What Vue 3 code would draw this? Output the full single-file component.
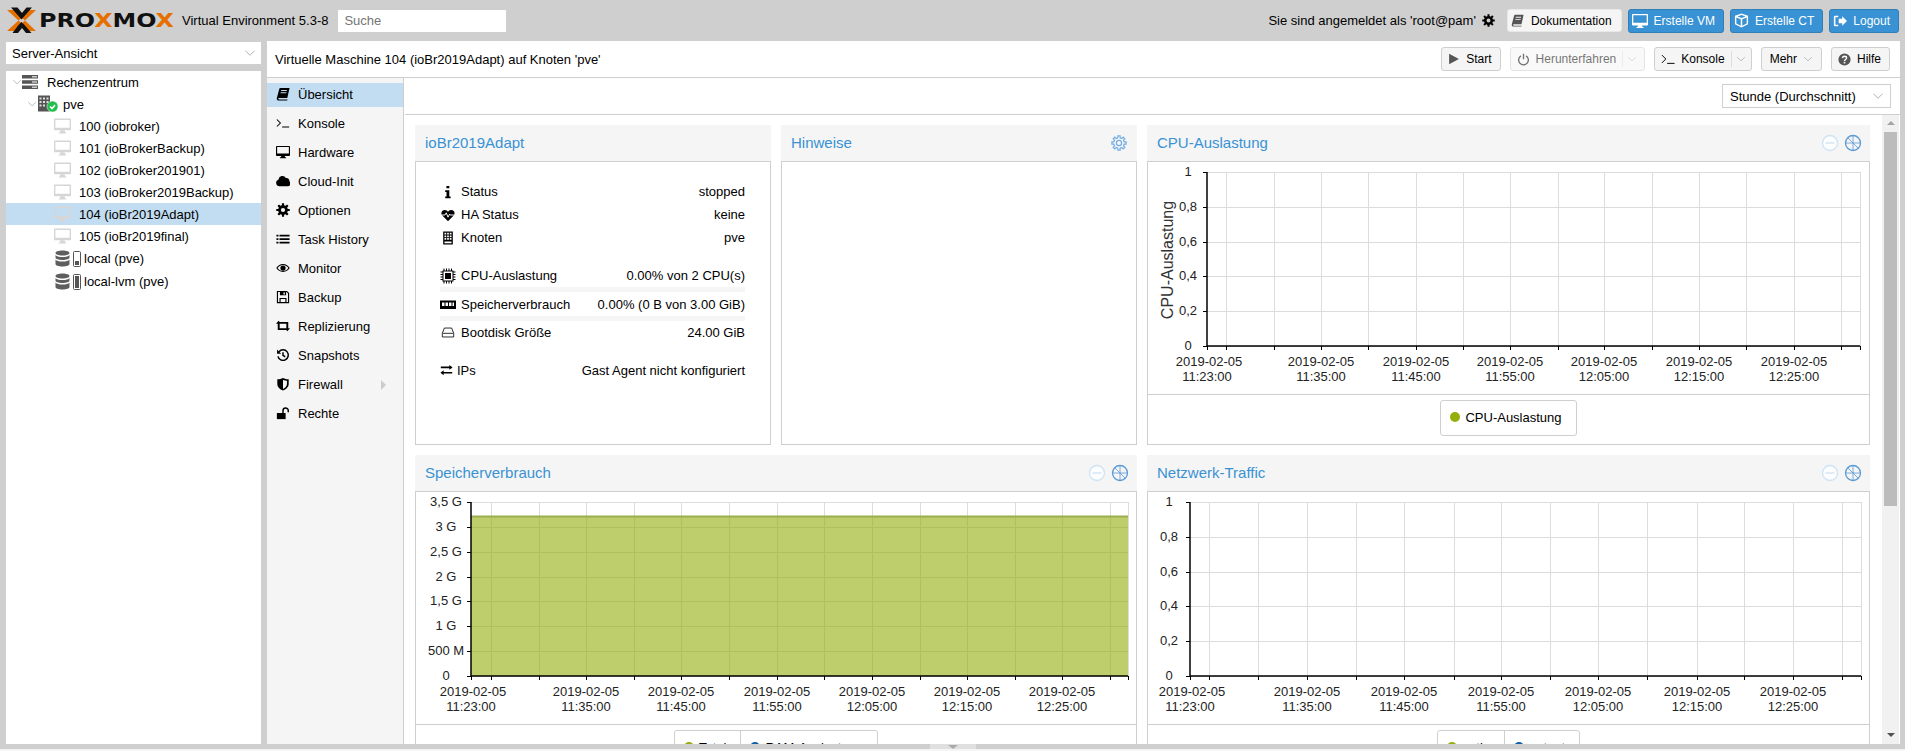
<template>
  <div class="app">
    <header class="topbar">
      <svg class="logo" width="176" height="41" viewBox="0 0 176 41">
        <path d="M7 10h8l7 7.5-3.5 3zM7 31h8l7-7.5-3.500-3zM36 10h-8l-6.500 7.500 3.500 3zM36 31h-8l-6.500-7.500 3.500-3z" fill="#e57000" />
        <path d="M11 7.500h6.500L22 13l4.500-5.500H32L24.500 16l-3 3.500-3-3.500zM12.500 33H18l4-5 4 5h5.500L24.500 25l-3-3-3 3z" fill="#111" />
        <text x="39" y="27" class="logo-text" textLength="135" lengthAdjust="spacingAndGlyphs">PRO<tspan fill="#e57000">X</tspan>MO<tspan fill="#e57000">X</tspan></text>
      </svg>
      <span class="version">Virtual Environment 5.3-8</span>
      <input class="search" placeholder="Suche" />
      <div class="user">
        <span>Sie sind angemeldet als 'root@pam'</span>
        <Ico name="gear" :size="13" class="user-gear" />
        <button class="btn doc"><Ico name="book" :size="13" class="dim" />Dokumentation</button>
        <button class="btn primary"><Ico name="desktop" :size="16" />Erstelle VM</button>
        <button class="btn primary"><Ico name="cube" :size="15" />Erstelle CT</button>
        <button class="btn primary"><Ico name="signout" :size="14" />Logout</button>
      </div>
    </header>

    <div class="main">
      <aside class="left">
        <div class="combo view-combo">
          <span>Server-Ansicht</span>
          <Ico name="chev" :size="12" class="chev" />
        </div>
        <div class="tree">
          <div class="row depth0">
            <Ico name="chev" :size="10" class="chev twisty" />
            <svg width="16" height="16" viewBox="0 0 16 16" class="tree-ico">
              <path d="M0 1h16v3.600H0zM0 6.200h16v3.600H0zM0 11.400h16v3.600H0z" fill="#555" />
              <path d="M10 2h5v1.400h-5zM10 7.300h5v1.400h-5zM10 12.500h5v1.400h-5z" fill="#ccc" />
            </svg>
            <span class="first-label">Rechenzentrum</span>
          </div>
          <div class="row depth1">
            <Ico name="chev" :size="10" class="chev twisty" />
            <svg width="20" height="18" viewBox="0 0 20 18" class="tree-ico">
              <path d="M0 .500h12v16H0z" fill="#555" />
              <path d="M1.500 2.500h2v2h-2zM5 2.500h2v2H5zM8.500 2.500h2v2h-2zM1.500 6h2v2h-2zM5 6h2v2H5zM8.500 6h2v2h-2zM1.500 9.500h2v2h-2zM5 9.500h2v2H5z" fill="#ddd" />
              <circle cx="14.500" cy="11.500" r="5.500" fill="#21bf4b" stroke="#fff" stroke-width=".5" />
              <path d="M12 11.500l2 2 3-3.400" fill="none" stroke="#fff" stroke-width="1.600" />
            </svg>
            <span class="pve-label">pve</span>
          </div>
          <div v-for="vm in vms" :key="vm.id" class="row depth2" :class="{ selected: vm.id === 104 }">
            <svg width="17" height="16" viewBox="0 0 16 15" class="tree-ico">
              <path fill-rule="evenodd" d="M1 .500h14c.6 0 1 .4 1 1V10.500c0 .6-.4 1-1 1H1c-.6 0-1-.4-1-1V1.500c0-.6.4-1 1-1zM1.300 1.800v7.400h13.400V1.800z" fill="#d6d6d6" />
              <path d="M6 11.500h4l.5 2h1v1h-7v-1h1z" fill="#d6d6d6" />
            </svg>
            <span class="vm-label">{{ vm.id }} ({{ vm.name }})</span>
          </div>
          <div v-for="st in storages" :key="st.name" class="row depth2 storage">
            <svg width="15" height="17" viewBox="0 0 15 17" class="tree-ico">
              <path d="M7.500 .500c4 0 7 1 7 2.500s-3 2.500-7 2.500-7-1-7-2.500 3-2.500 7-2.500zM.5 5c1 1.400 3.500 2 7 2s6-.6 7-2v2.500c0 1.500-3 2.500-7 2.500s-7-1-7-2.500zM.5 9.500c1 1.400 3.500 2 7 2s6-.6 7-2v4.500c0 1.500-3 2.500-7 2.500s-7-1-7-2.500z" fill="#5e5e5e" />
            </svg>
            <svg width="8" height="16" viewBox="0 0 8 16" class="battery">
              <rect x=".5" y=".5" width="7" height="15" rx="1" fill="#fff" stroke="#555" />
              <rect x="2" :y="14 - st.level" width="4" :height="st.level" fill="#555" />
            </svg>
            <span class="st-label">{{ st.name }}</span>
          </div>
        </div>
      </aside>

      <section class="content">
        <div class="title-bar">
          <span class="title">Virtuelle Maschine 104 (ioBr2019Adapt) auf Knoten 'pve'</span>
          <div class="actions">
            <button class="btn"><Ico name="play" :size="12" class="dim" />Start</button>
            <button class="btn split disabled"><Ico name="power" :size="13" />Herunterfahren<i class="sep"></i><Ico name="chev" :size="10" class="chev" /></button>
            <button class="btn split"><Ico name="terminal" :size="14" />Konsole<i class="sep"></i><Ico name="chev" :size="10" class="chev" /></button>
            <button class="btn more">Mehr<Ico name="chev" :size="10" class="chev" /></button>
            <button class="btn"><Ico name="question" :size="13" class="dim" />Hilfe</button>
          </div>
        </div>

        <div class="body">
          <nav class="nav">
            <a v-for="item in navItems" :key="item.label" class="nav-item" :class="{ active: item.label === 'Übersicht' }">
              <Ico :name="item.icon" :size="14" />
              <span>{{ item.label }}</span>
              <i v-if="item.arrow" class="arrow"></i>
            </a>
          </nav>

          <div class="pane">
            <div class="range-bar">
              <div class="combo range-combo">
                <span>Stunde (Durchschnitt)</span>
                <Ico name="chev" :size="12" class="chev" />
              </div>
            </div>

            <div class="dash">
              <div class="grid">
                <div class="panel">
                  <div class="panel-head"><span>ioBr2019Adapt</span></div>
                  <div class="panel-body info">
                    <div v-for="r in infoTop" :key="r.label" class="info-row">
                      <Ico :name="r.icon" :size="r.size || 14" class="info-ico" />
                      <span>{{ r.label }}</span>
                      <span class="val">{{ r.value }}</span>
                    </div>
                    <div class="info-row cpu-row">
                      <Ico name="cpu" :size="16" class="info-ico" />
                      <span>CPU-Auslastung</span>
                      <span class="val">0.00% von 2 CPU(s)</span>
                    </div>
                    <div class="usage"></div>
                    <div class="info-row">
                      <Ico name="memory" :size="16" class="info-ico" />
                      <span>Speicherverbrauch</span>
                      <span class="val">0.00% (0 B von 3.00 GiB)</span>
                    </div>
                    <div class="usage last"></div>
                    <div class="info-row">
                      <Ico name="hdd" :size="13" class="info-ico" />
                      <span>Bootdisk Größe</span>
                      <span class="val">24.00 GiB</span>
                    </div>
                    <div class="info-row ip-row">
                      <Ico name="exchange" :size="13" class="ip-ico" />
                      <span>IPs</span>
                      <span class="val">Gast Agent nicht konfiguriert</span>
                    </div>
                  </div>
                </div>

                <div class="panel">
                  <div class="panel-head">
                    <span>Hinweise</span>
                    <svg width="16" height="16" viewBox="0 0 16 16" class="notes-gear">
                      <path :d="gearOutline" fill="none" stroke="#73ade3" stroke-width="1.200" />
                      <circle cx="8" cy="8" r="2.600" fill="none" stroke="#73ade3" stroke-width="1.200" />
                    </svg>
                  </div>
                  <div class="panel-body"></div>
                </div>

                <div v-for="c in charts" :key="c.title" class="panel" :class="c.cls">
                  <div class="panel-head">
                    <span>{{ c.title }}</span>
                    <span class="tools">
                      <svg width="18" height="18" viewBox="0 0 18 18">
                        <circle cx="9" cy="9" r="7.500" fill="#fbfdff" stroke="#cfe3f3" stroke-width="1.300" />
                        <path d="M4.500 9h9" stroke="#cfe3f3" stroke-width="1.300" />
                      </svg>
                      <svg width="18" height="18" viewBox="0 0 18 18">
                        <circle cx="9" cy="9" r="7.500" fill="none" stroke="#5b9bd5" stroke-width="1.300" />
                        <path d="M9 1.500v15M3.700 3.700L9 9H1.500M14.300 14.300L9 9h7.500" fill="none" stroke="#5b9bd5" stroke-width=".8" />
                      </svg>
                    </span>
                  </div>
                  <div class="panel-body chart-body">
                    <svg class="chart" :viewBox="c.viewBox" :width="c.w" height="232">
                      <g class="grid-lines">
                        <line v-for="x in c.verticals" :key="'v' + x" :x1="x" :x2="x" :y1="c.top" :y2="c.bottom" />
                        <line v-for="t in c.yTicks" :key="'h' + t.y" :x1="c.x0" :x2="c.x1" :y1="t.y" :y2="t.y" />
                        <line :x1="c.x1" :x2="c.x1" :y1="c.top" :y2="c.bottom" />
                      </g>
                      <g v-if="c.fillTop">
                        <rect :x="c.x0" :y="c.fillTop" :width="c.x1 - c.x0" :height="c.bottom - c.fillTop" fill="#94ae0a" fill-opacity=".6" />
                        <line :x1="c.x0" :x2="c.x1" :y1="c.fillTop + .5" :y2="c.fillTop + .5" stroke="#9aae50" stroke-width="2" />
                      </g>
                      <g class="ticks">
                        <line v-for="x in c.verticals" :key="'tx' + x" :x1="x" :x2="x" :y1="c.bottom" :y2="c.bottom + 4" />
                        <line :x1="c.x0" :x2="c.x0" :y1="c.bottom" :y2="c.bottom + 4" />
                        <line :x1="c.x1" :x2="c.x1" :y1="c.bottom" :y2="c.bottom + 4" />
                        <line v-for="t in c.yTicks" :key="'ty' + t.y" :x1="c.x0 - 4" :x2="c.x0" :y1="t.y" :y2="t.y" />
                      </g>
                      <line class="axis" :x1="c.x0" :x2="c.x0" :y1="c.top" :y2="c.bottom + 1" />
                      <line class="axis" :x1="c.x0" :x2="c.x1" :y1="c.bottom" :y2="c.bottom" />
                      <g class="labels">
                        <text v-for="t in c.yTicks" :key="'yl' + t.y" :x="c.x0 - c.labelOffset" :y="t.y + 4" text-anchor="middle">{{ t.label }}</text>
                        <g v-for="(l, i) in c.xLabels" :key="l.time">
                          <text :x="l.x + (i === 0 ? 2 : 0)" :y="c.bottom + 20" text-anchor="middle">2019-02-05</text>
                          <text :x="l.x" :y="c.bottom + 35" text-anchor="middle">{{ l.time }}</text>
                        </g>
                      </g>
                      <text v-if="c.axisTitle" class="axis-title" :transform="`translate(${c.x0 - 34} 260) rotate(-90)`" text-anchor="middle">{{ c.axisTitle }}</text>
                    </svg>
                    <div class="legend-bar">
                      <div class="legend">
                        <div v-for="l in c.legend" :key="l.label" class="legend-item">
                          <i class="dot" :style="{ background: l.color }"></i>
                          <span>{{ l.label }}</span>
                        </div>
                      </div>
                    </div>
                  </div>
                </div>
              </div>

              <div class="scrollbar">
                <i class="sb-up"></i>
                <div class="sb-thumb"></div>
                <i class="sb-down"></i>
              </div>
            </div>
          </div>
        </div>
      </section>
    </div>

    <div class="log-handle"><div class="handle"><i></i></div></div>
  </div>
</template>

<script setup>
import { h } from 'vue'

function gearPath(cx, cy, ro, ri) {
  let d = ''
  for (let i = 0; i < 8; i++) {
    const a = i * 45
    const pts = [[ri, a - 13], [ro, a - 9], [ro, a + 9], [ri, a + 13]]
    for (const [r, deg] of pts) {
      const rad = (deg * Math.PI) / 180
      d += `${d ? 'L' : 'M'}${(cx + r * Math.cos(rad)).toFixed(2)} ${(cy + r * Math.sin(rad)).toFixed(2)}`
    }
  }
  return d + 'z'
}

const gearOutline = gearPath(8, 8, 7.2, 5.3)

// chip pins, four on each side
function cpuPins() {
  let d = ''
  for (const p of [3.5, 6, 8.5, 11]) {
    d += `M${p} .5h1v2h-1zM${p} 13.5h1v2h-1zM.5 ${p}h2v1h-2zM13.5 ${p}h2v1h-2z`
  }
  return d
}

const icons = {
  gear: { f: gearPath(8, 8, 7.8, 5.6) + 'M8 5.600a2.400 2.400 0 1 0 0 4.800 2.400 2.400 0 0 0 0-4.800z' },
  book: { f: 'M5 1h10.500l-2.600 11.500H3.600c-.8 0-1.200.4-1.100 1s.6.9 1.300.9h9.300l-.3 1.100H3.400C1.600 15.500.4 14.200 1 12.500L3.800 2.100C4 1.400 4.400 1 5 1zM6 3.500l-.2 1h6.500l.2-1zM5.400 6l-.2 1h6.500l.2-1z' },
  desktop: { f: 'M1 1h14c.6 0 1 .4 1 1v9.500c0 .6-.4 1-1 1H1c-.6 0-1-.4-1-1V2c0-.6.4-1 1-1zM1.300 2.300v7.500h13.400V2.300zM6 12.500h4l.4 1.500h1.100v1h-7v-1h1.100z' },
  cube: { f: 'M8 .500l7 2.500v9l-7 3.500L1 12V3zM8 2.100L3.700 3.600 8 5.200l4.300-1.600zM2.500 4.800v6.300l4.700 2.400V6.600zM13.500 4.800L8.800 6.600v6.900l4.700-2.400z' },
  signout: { f: 'M6 2H2.500C1.700 2 1 2.700 1 3.500v9c0 .8.7 1.500 1.500 1.500H6v-1.600H2.800V3.600H6zM6.500 5.500h4V2.500L16 8l-5.500 5.500v-3h-4z' },
  play: { f: 'M1.500 1l13 7-13 7z' },
  power: { s: 'M4.800 3.500a6 6 0 1 0 6.400 0M8 .8v7', w: 1.7 },
  terminal: { s: 'M1 3.500L5.500 8 1 12.500M7 13h8.500', w: 1.1 },
  question: { f: 'M8 .5a7.500 7.500 0 1 1 0 15 7.500 7.500 0 0 1 0-15zM7 11v2h2v-2z', k: 'M5.500 6.200C5.700 4.800 6.700 4 8 4c1.400 0 2.500.9 2.500 2.100 0 1.900-2.500 1.900-2.500 4', kw: 1.8 },
  chev: { s: 'M2 5l6 6 6-6', w: 1.2 },
  terminalNav: { s: 'M1 4l4 4-4 4M7 12.500h8', w: 1.200 },
  cloud: { f: 'M4 14a4 4 0 0 1-1.100-7.800 4.500 4.500 0 0 1 8.400-1.600 3.100 3.100 0 0 1 3.900 3.600A3.200 3.200 0 0 1 12.700 14z' },
  list: { f: 'M.5 3h2.300v2H.5zM4 3h11.500v2H4zM.5 7h2.300v2H.5zM4 7h11.500v2H4zM.5 11h2.300v2H.5zM4 11h11.500v2H4z' },
  eye: { f: 'M8 3.500c3.500 0 6.200 2.100 7.700 4.500-1.500 2.400-4.200 4.500-7.700 4.500S1.800 10.400.3 8C1.800 5.600 4.500 3.500 8 3.500zM8 4.500C5.300 4.500 3.200 6 1.900 8c1.300 2 3.400 3.500 6.100 3.500s4.800-1.500 6.100-3.500C12.800 6 10.700 4.500 8 4.500zM8 5a3 3 0 1 1 0 6 3 3 0 0 1 0-6z' },
  save: { f: 'M1 1h11.500L15 3.500V15H1zM2.300 2.300v11.400H4V9h8v4.700h1.700V4L12 2.300h-.5V6h-7V2.300zM8.500 2.800h1.700v2.400H8.500zM5.300 10.300v3.400h5.400v-3.400z' },
  retweet: { f: 'M0 5.500L3 2l3 3.500H4.200v5H10l1.800 2.200H2V5.500zM16 10.500L13 14l-3-3.500h1.800v-5H6L4.200 3.300H14v7.200z' },
  history: { s: 'M3.400 4.300A6 6 0 1 1 2.200 9.500M8 4.800v3.700l2.500 1.500', w: 1.700, f: 'M1.200 1.800v4.700h4.700z' },
  shield: { f: 'M8 1c2 1 4 1.500 6.500 1.500V8c0 3.500-3 6-6.500 7.500C4.500 14 1.500 11.500 1.500 8V2.500C4 2.500 6 2 8 1zM8 3.300v10.300c2.500-1.200 4.500-3 4.500-5.600V4.200C11 4.200 9.500 3.900 8 3.300z' },
  unlock: { f: 'M1 8h10v7H1z', s: 'M8 8V5.200a3 3 0 0 1 6 0V7', w: 1.700 },
  info: { f: 'M6.200 1.200h3.300v2.500H6.200zM4.800 6h4.700v7h1.500v2H4.800v-2h1.500V8H4.800z' },
  heartbeat: { f: 'M8 15L1.500 8.500C-.4 6.500.3 2.500 4 2.200c2-.2 3.400 1 4 2 .6-1 2-2.200 4-2 3.700.3 4.400 4.300 2.500 6.300z', k: 'M1 8h3.500l1.500-2.500 2 5 1.800-3.500.7 1H15', kw: 1.100 },
  building: { f: 'M2.500 .5h11v15h-11zM4 2v2h2V2zM7 2v2h2V2zM10 2v2h2V2zM4 5v2h2V5zM7 5v2h2V5zM10 5v2h2V5zM4 8v2h2V8zM7 8v2h2V8zM10 8v2h2V8zM4 12v2h8v-2z' },
  cpu: { f: cpuPins() + 'M2.500 2.500h11v11h-11zM3.500 3.500v9h9v-9zM5 5h6v6H5z' },
  memory: { f: 'M0 3.500h16v8.500H0zM2 5.500V9h2.500V5.500zM5.500 5.500V9H8V5.500zM9 5.500V9h2.500V5.500zM12.500 5.500V9H14V5.500z' },
  hdd: { s: 'M3.500 2.500h9L15 9v4.500H1V9zM1.500 9h13', w: 1.000 },
  exchange: { f: 'M1 3.200h10.500V1.200l4 3-4 3v-2H1zM15 9.800H4.500v-2l-4 3 4 3v-2H15z' },
}

const Ico = (props) => {
  const def = icons[props.name] || {}
  const kids = []
  if (def.f) kids.push(h('path', { d: def.f, fill: 'currentColor', 'fill-rule': 'evenodd' }))
  if (def.s) kids.push(h('path', { d: def.s, fill: 'none', stroke: 'currentColor', 'stroke-width': def.w || 1 }))
  if (def.k) kids.push(h('path', { d: def.k, fill: 'none', stroke: '#fff', 'stroke-width': def.kw || 1 }))
  return h('svg', { width: props.size || 16, height: props.size || 16, viewBox: '0 0 16 16' }, kids)
}
Ico.props = ['name', 'size']

const vms = [
  { id: 100, name: 'iobroker' },
  { id: 101, name: 'ioBrokerBackup' },
  { id: 102, name: 'ioBroker201901' },
  { id: 103, name: 'ioBroker2019Backup' },
  { id: 104, name: 'ioBr2019Adapt' },
  { id: 105, name: 'ioBr2019final' },
]

const storages = [
  { name: 'local (pve)', level: 4 },
  { name: 'local-lvm (pve)', level: 12 },
]

const navItems = [
  { label: 'Übersicht', icon: 'book' },
  { label: 'Konsole', icon: 'terminalNav' },
  { label: 'Hardware', icon: 'desktop' },
  { label: 'Cloud-Init', icon: 'cloud' },
  { label: 'Optionen', icon: 'gear' },
  { label: 'Task History', icon: 'list' },
  { label: 'Monitor', icon: 'eye' },
  { label: 'Backup', icon: 'save' },
  { label: 'Replizierung', icon: 'retweet' },
  { label: 'Snapshots', icon: 'history' },
  { label: 'Firewall', icon: 'shield', arrow: true },
  { label: 'Rechte', icon: 'unlock' },
]

const infoTop = [
  { label: 'Status', value: 'stopped', icon: 'info' },
  { label: 'HA Status', value: 'keine', icon: 'heartbeat' },
  { label: 'Knoten', value: 'pve', icon: 'building' },
]

const times = ['11:23:00', '11:35:00', '11:45:00', '11:55:00', '12:05:00', '12:15:00', '12:25:00']
const unitTicks = (top, bottom) =>
  ['1', '0,8', '0,6', '0,4', '0,2', '0'].map((label, i) => ({ label, y: Math.round(top + ((bottom - top) * i) / 5) }))

function xLabels(x0, verticals) {
  return times.map((time, i) => ({ time, x: i === 0 ? x0 : verticals[i * 2] }))
}

const cpuV = [1226, 1274, 1321, 1368, 1416, 1463, 1510, 1558, 1604, 1652, 1699, 1746, 1794, 1841]
const memV = [491, 539, 586, 634, 681, 729, 777, 824, 872, 920, 967, 1015, 1062, 1110]
const netV = [1209, 1258, 1307, 1356, 1404, 1454, 1501, 1550, 1598, 1647, 1697, 1744, 1793, 1842]

const charts = [
  {
    title: 'CPU-Auslastung',
    viewBox: '1148 162 721 232',
    w: 721,
    x0: 1207,
    x1: 1860,
    top: 172,
    bottom: 346,
    labelOffset: 19,
    verticals: cpuV,
    yTicks: unitTicks(172, 346),
    xLabels: xLabels(1207, cpuV),
    axisTitle: 'CPU-Auslastung',
    legend: [{ label: 'CPU-Auslastung', color: '#94ae0a' }],
  },
  {
    title: 'Speicherverbrauch',
    cls: 'wide',
    viewBox: '416 492 720 232',
    w: 720,
    x0: 471,
    x1: 1128,
    top: 502,
    bottom: 676,
    labelOffset: 25,
    fillTop: 516,
    verticals: memV,
    yTicks: ['3,5 G', '3 G', '2,5 G', '2 G', '1,5 G', '1 G', '500 M', '0'].map((label, i) => ({
      label,
      y: Math.round(502 + (174 * i) / 7),
    })),
    xLabels: xLabels(471, memV),
    legend: [
      { label: 'Total', color: '#94ae0a' },
      { label: 'RAM-Auslastung', color: '#115fa6' },
    ],
  },
  {
    title: 'Netzwerk-Traffic',
    viewBox: '1148 492 721 232',
    w: 721,
    x0: 1190,
    x1: 1861,
    top: 502,
    bottom: 676,
    labelOffset: 21,
    verticals: netV,
    yTicks: unitTicks(502, 676),
    xLabels: xLabels(1190, netV),
    legend: [
      { label: 'netin', color: '#94ae0a' },
      { label: 'netout', color: '#115fa6' },
    ],
  },
]
</script>

<style scoped>
.app {
  width: 1905px;
  height: 751px;
  display: flex;
  flex-direction: column;
  overflow: hidden;
  background: #cfcfcf;
  font-family: "Liberation Sans", Arial, sans-serif;
  font-size: 13px;
  color: #000;
}

.topbar {
  height: 41px;
  flex: none;
  display: flex;
  align-items: center;
  padding-right: 6px;
}

.logo { flex: none; margin-right: 6px; }
.logo-text {
  font-family: "DejaVu Sans", sans-serif;
  font-weight: 700;
  font-size: 19px;
  fill: #111;
}

.search {
  width: 168px;
  height: 22px;
  box-sizing: border-box;
  margin-left: 10px;
  padding: 0 6px;
  border: 0;
  background: #fff;
  font: 13px "Liberation Sans", Arial, sans-serif;
}
.search::placeholder { color: #757575; opacity: 1; }

.user {
  margin-left: auto;
  display: flex;
  align-items: center;
}
.user-gear { margin: 0 12px 0 6px; }

.btn {
  height: 24px;
  box-sizing: border-box;
  display: inline-flex;
  align-items: center;
  gap: 6px;
  padding: 0 8px 0 6px;
  border: 1px solid #cfcfcf;
  border-radius: 3px;
  background: #f5f5f5;
  color: #000;
  font: 12px "Liberation Sans", Arial, sans-serif;
  white-space: nowrap;
}
.doc {
  height: 23px;
  padding: 0 9px 0 3px;
  gap: 7px;
  border-color: #e8e8e8;
}
.primary {
  margin-left: 6px;
  background: #3892d4;
  border-color: #2f7fb9;
  color: #fff;
  padding: 0 8px 0 3px;
}
.dim { color: #555; }

.main {
  flex: 1;
  min-height: 0;
  display: flex;
  padding: 0 5px 0 6px;
  gap: 6px;
}

.left {
  width: 255px;
  flex: none;
  display: flex;
  flex-direction: column;
  padding-top: 1px;
  gap: 7px;
}

.combo {
  display: flex;
  align-items: center;
  justify-content: space-between;
  background: #fff;
  box-sizing: border-box;
}
.view-combo { height: 22px; padding: 0 5px 0 6px; }
.chev { color: #a8a8a8; flex: none; }

.tree { flex: 1; background: #fff; }
.row {
  height: 22px;
  display: flex;
  align-items: center;
  white-space: nowrap;
}
.row.storage { height: 23px; }
.selected { background: #c2ddf2; }
.depth0 { padding-left: 6px; }
.depth1 { padding-left: 21px; }
.depth2 { padding-left: 48px; }
.depth2.storage { padding-left: 49px; }
.tree-ico { flex: none; }
.depth1 .tree-ico { margin-left: 1px; }
.first-label { margin-left: 9px; }
.pve-label { margin-left: 5px; }
.vm-label { margin-left: 8px; }
.battery { margin-left: 3px; flex: none; }
.st-label { margin-left: 3px; }

.content {
  flex: 1;
  min-width: 0;
  display: flex;
  flex-direction: column;
  background: #fff;
}

.title-bar {
  height: 36px;
  flex: none;
  display: flex;
  align-items: center;
  justify-content: space-between;
  padding: 0 10px 0 8px;
  border-bottom: 1px solid #cfcfcf;
}
.actions { display: flex; gap: 9px; }
.sep { width: 1px; height: 16px; background: #ddd; }
.sep + svg { margin-left: -2px; }
.split { padding-right: 5px; }
.disabled { opacity: .55; padding-right: 7px; }
.more { padding-left: 8px; }

.body { flex: 1; min-height: 0; display: flex; }

.nav {
  width: 137px;
  flex: none;
  box-sizing: border-box;
  padding-top: 5px;
  background: #f5f5f5;
  border-right: 1px solid #cfcfcf;
}
.nav-item {
  position: relative;
  box-sizing: border-box;
  height: 24px;
  margin: 0 0 5px;
  display: flex;
  align-items: center;
  gap: 8px;
  padding: 0 0 2px 9px;
}
.active { background: #c2ddf2; }
.arrow {
  position: absolute;
  left: 114px;
  top: 7px;
  border-left: 5px solid #ccc;
  border-top: 5px solid transparent;
  border-bottom: 5px solid transparent;
}

.pane { flex: 1; min-width: 0; display: flex; flex-direction: column; }

.range-bar {
  height: 36px;
  flex: none;
  display: flex;
  justify-content: flex-end;
  align-items: center;
  padding-right: 9px;
  border-bottom: 1px solid #cfcfcf;
  margin-left: 1px;
}
.range-combo {
  width: 169px;
  height: 24px;
  padding: 0 6px 0 7px;
  border: 1px solid #cfcfcf;
}

.dash { flex: 1; min-height: 0; display: flex; overflow: hidden; margin-left: 1px; }

.grid {
  flex: 1;
  padding: 10px 0 0 10px;
  display: grid;
  grid-template-columns: 356px 356px 723px;
  grid-template-rows: 320px 320px;
  gap: 10px;
  align-content: start;
}
.wide { grid-column: span 2; }

.panel { display: flex; flex-direction: column; min-width: 0; }
.panel-head {
  height: 36px;
  flex: none;
  display: flex;
  align-items: center;
  justify-content: space-between;
  padding: 0 8px 0 10px;
  background: #f5f5f5;
  color: #3892d4;
  font-size: 15px;
}
.panel-head > span:first-child { margin-bottom: 2px; }
.panel-body {
  flex: 1;
  min-height: 0;
  box-sizing: border-box;
  border: 1px solid #cfcfcf;
}
.notes-gear { margin-right: 2px; }
.tools { display: flex; gap: 5px; }

.info { padding: 18px 25px 0 24px; }
.info-row {
  height: 23px;
  display: flex;
  align-items: center;
  white-space: nowrap;
}
.info-ico { width: 16px; flex: none; margin-right: 5px; }
.val { margin-left: auto; }
.cpu-row { margin-top: 15px; }
.usage { height: 5px; background: #f5f5f5; margin-bottom: 1px; }
.usage.last { margin-bottom: 0; }
.ip-row { margin-top: 15px; }
.ip-ico { flex: none; margin-right: 4px; }

.chart-body { display: flex; flex-direction: column; }
.chart { display: block; flex: none; }
.grid-lines line { stroke: #dcdcdc; stroke-width: 1; shape-rendering: crispEdges; }
.ticks line { stroke: #000; stroke-width: 1; shape-rendering: crispEdges; }
.axis { stroke: #000; stroke-width: 1.5; }
.labels text { font-size: 13px; fill: #222; }
.axis-title { font-size: 16px; fill: #333; }

.legend-bar {
  flex: none;
  display: flex;
  justify-content: center;
  border-top: 1px solid #cfcfcf;
  padding-top: 5px;
}
.legend {
  display: flex;
  height: 36px;
  box-sizing: border-box;
  border: 1px solid #cfcfcf;
  border-radius: 3px;
  background: #fff;
}
.legend-item {
  display: flex;
  align-items: center;
  gap: 5px;
  padding: 0 14px 2px 9px;
  white-space: nowrap;
}
.legend-item + .legend-item { border-left: 1px solid #cfcfcf; }
.dot { width: 10px; height: 10px; border-radius: 50%; flex: none; }

.scrollbar {
  width: 17px;
  flex: none;
  margin-right: 1px;
  background: #f1f1f1;
  position: relative;
}
.sb-thumb {
  position: absolute;
  left: 2px;
  right: 2px;
  top: 17px;
  height: 374px;
  background: #bcbcbc;
}
.sb-up, .sb-down {
  position: absolute;
  left: 5px;
  border-left: 4px solid transparent;
  border-right: 4px solid transparent;
}
.sb-up { top: 6px; border-bottom: 4px solid #a3a3a3; }
.sb-down { bottom: 7px; border-top: 4px solid #505050; }

.log-handle {
  height: 7px;
  flex: none;
  box-sizing: border-box;
  border-bottom: 2px solid #f5f5f5;
  background: #cfcfcf;
  display: flex;
  justify-content: center;
}
.handle {
  width: 46px;
  height: 5px;
  background: #e0e0e0;
  display: flex;
  justify-content: center;
  align-items: center;
}
.handle i {
  border-left: 5px solid transparent;
  border-right: 5px solid transparent;
  border-top: 4px solid #aaa;
}
</style>

<style>
html, body { margin: 0; overflow: hidden; }
</style>
